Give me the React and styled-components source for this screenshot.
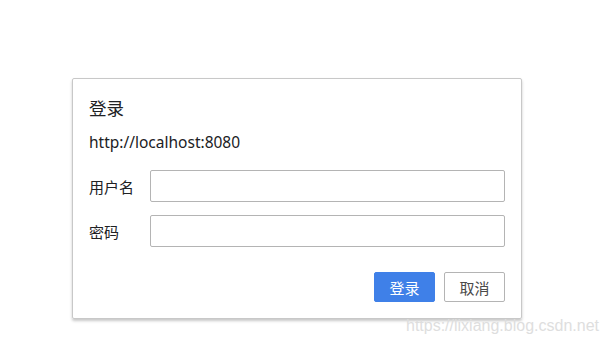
import React from "react";
import styled, { createGlobalStyle } from "styled-components";

const GlobalStyle = createGlobalStyle`
  html, body {
    margin: 0;
    padding: 0;
    background: #fff;
  }
  body {
    font-family: "Noto Sans", "Noto Sans CJK SC", sans-serif;
    color: #202124;
  }
`;

const Page = styled.div`
  position: relative;
  width: 608px;
  height: 341px;
  padding: 78px 0 0 72px;
  box-sizing: border-box;
`;

const Dialog = styled.div`
  width: 450px;
  height: 241px;
  box-sizing: border-box;
  border: 1px solid #c8c8c8;
  border-radius: 2px;
  box-shadow: 0 2px 3px rgba(0, 0, 0, 0.22);
  padding: 16px 16px 0 16px;
  display: flex;
  flex-direction: column;
`;

const Title = styled.h2`
  margin: 0;
  font-size: 17.5px;
  font-weight: normal;
  line-height: 26px;
  font-family: "Noto Sans CJK SC", sans-serif;
`;

const Origin = styled.div`
  margin-top: 11px;
  font-size: 15.5px;
  line-height: 20px;
`;

const Fields = styled.div`
  margin-top: 18px;
  display: flex;
  flex-direction: column;
  gap: 13px;
`;

const Row = styled.label`
  display: flex;
  align-items: center;
`;

const Label = styled.span`
  width: 61px;
  font-size: 15px;
  font-family: "Noto Sans CJK SC", sans-serif;
`;

const Input = styled.input`
  width: 355px;
  height: 32px;
  box-sizing: border-box;
  border: 1px solid #b4b4b4;
  border-radius: 2px;
  outline: none;
  padding: 0 8px;
  font-size: 14px;
`;

const Actions = styled.div`
  margin-top: 25px;
  display: flex;
  justify-content: flex-end;
  gap: 9px;
`;

const Button = styled.button`
  width: 61px;
  height: 30px;
  box-sizing: border-box;
  border-radius: 2px;
  font-size: 15px;
  font-family: "Noto Sans CJK SC", sans-serif;
  cursor: pointer;
  border: 1px solid ${(p) => (p.$primary ? "#3f80e8" : "#b4b4b4")};
  background: ${(p) => (p.$primary ? "#3f80e8" : "#fff")};
  color: ${(p) => (p.$primary ? "#fff" : "#4a4a4a")};
`;

const Watermark = styled.div`
  position: absolute;
  right: 9px;
  bottom: 6px;
  font-family: "Liberation Sans", sans-serif;
  font-size: 16px;
  color: #dedede;
`;

export default function App() {
  return (
    <>
      <GlobalStyle />
      <Page>
        <Dialog>
          <Title>登录</Title>
          <Origin>http://localhost:8080</Origin>
          <Fields>
            <Row>
              <Label>用户名</Label>
              <Input type="text" />
            </Row>
            <Row>
              <Label>密码</Label>
              <Input type="password" />
            </Row>
          </Fields>
          <Actions>
            <Button $primary>登录</Button>
            <Button>取消</Button>
          </Actions>
        </Dialog>
        <Watermark>https://lixiang.blog.csdn.net</Watermark>
      </Page>
    </>
  );
}
